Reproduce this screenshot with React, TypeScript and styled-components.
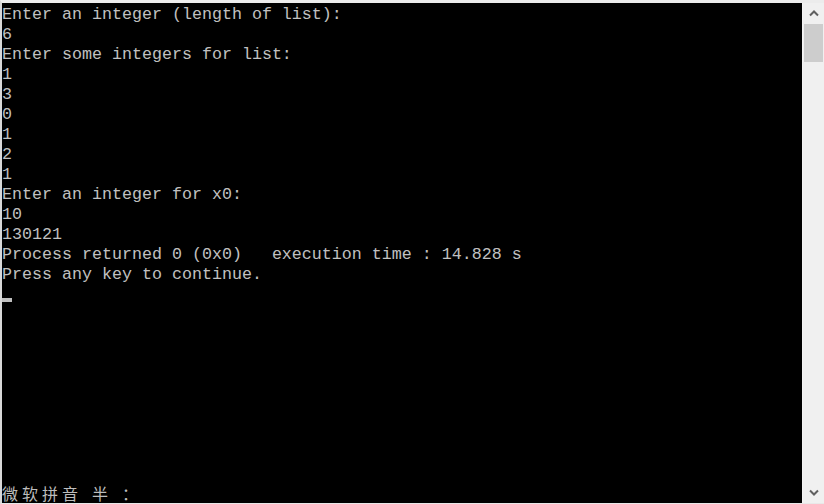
import React from "react";
import styled, { createGlobalStyle } from "styled-components";

const Global = createGlobalStyle`
  html, body, #root { margin: 0; padding: 0; height: 100%; }
  body { background: #f0f0f0; overflow: hidden; }
`;

const Frame = styled.div`
  box-sizing: border-box;
  height: 504px;
  width: 824px;
  display: flex;
  flex-direction: column;
  background: #f0f0f0;
  border-top: 3px solid #ececec;
  border-bottom: 1px solid #e8e8e8;
  border-left: 2px solid #d8d8d8;
`;

const Body = styled.div`
  flex: 1;
  display: flex;
  min-height: 0;
`;

const Console = styled.div`
  flex: 1;
  background: #000;
  color: #c0c0c0;
  display: flex;
  flex-direction: column;
  font-family: "Liberation Mono", "DejaVu Sans Mono", monospace;
  font-size: 16.667px;
`;

const Line = styled.div`
  box-sizing: border-box;
  height: 20px;
  padding-top: 2px;
  line-height: 20px;
  white-space: pre;
`;

const CursorLine = styled.div`
  height: 20px;
  display: flex;
  align-items: flex-end;
  padding-bottom: 1px;
  box-sizing: border-box;
`;

const Cursor = styled.span`
  width: 10px;
  height: 4px;
  background: #c0c0c0;
`;

const Ime = styled.div`
  margin-top: auto;
  height: 20px;
  display: flex;
  align-items: center;
  font-family: "Noto Sans CJK SC", sans-serif;
  font-size: 16px;
  line-height: 20px;
  color: #bdbdbd;
`;

const Glyph = styled.span<{ $w: number }>`
  width: ${(p) => p.$w}px;
  display: inline-block;
  text-align: left;
`;

const Scrollbar = styled.div`
  width: 22px;
  background: #f0f0f0;
  display: flex;
  flex-direction: column;
  align-items: center;
  border-left: 1px solid #f4f4f4;
  box-sizing: border-box;
`;

const Arrow = styled.div`
  height: 21px;
  width: 100%;
  display: flex;
  align-items: center;
  justify-content: center;
`;

const Thumb = styled.div`
  width: 19px;
  height: 38px;
  background: #cdcdcd;
`;

const Track = styled.div`
  flex: 1;
`;

const Chevron = ({ down }: { down?: boolean }) => (
  <svg width="10" height="7" viewBox="0 0 10 7">
    <path
      d={down ? "M1 1.5 L5 5.5 L9 1.5" : "M1 5.5 L5 1.5 L9 5.5"}
      fill="none"
      stroke="#606060"
      strokeWidth="2"
    />
  </svg>
);

const lines = [
  "Enter an integer (length of list):",
  "6",
  "Enter some integers for list:",
  "1",
  "3",
  "0",
  "1",
  "2",
  "1",
  "Enter an integer for x0:",
  "10",
  "130121",
  "Process returned 0 (0x0)   execution time : 14.828 s",
  "Press any key to continue.",
];

export default function App() {
  return (
    <>
      <Global />
      <Frame>
        <Body>
          <Console>
            {lines.map((l, i) => (
              <Line key={i}>{l}</Line>
            ))}
            <CursorLine>
              <Cursor />
            </CursorLine>
            <Ime>
              <Glyph $w={20}>微</Glyph>
              <Glyph $w={20}>软</Glyph>
              <Glyph $w={20}>拼</Glyph>
              <Glyph $w={20}>音</Glyph>
              <Glyph $w={10}> </Glyph>
              <Glyph $w={20}>半</Glyph>
              <Glyph $w={10}> </Glyph>
              <Glyph $w={20}>：</Glyph>
            </Ime>
          </Console>
          <Scrollbar>
            <Arrow>
              <Chevron />
            </Arrow>
            <Thumb />
            <Track />
            <Arrow>
              <Chevron down />
            </Arrow>
          </Scrollbar>
        </Body>
      </Frame>
    </>
  );
}
